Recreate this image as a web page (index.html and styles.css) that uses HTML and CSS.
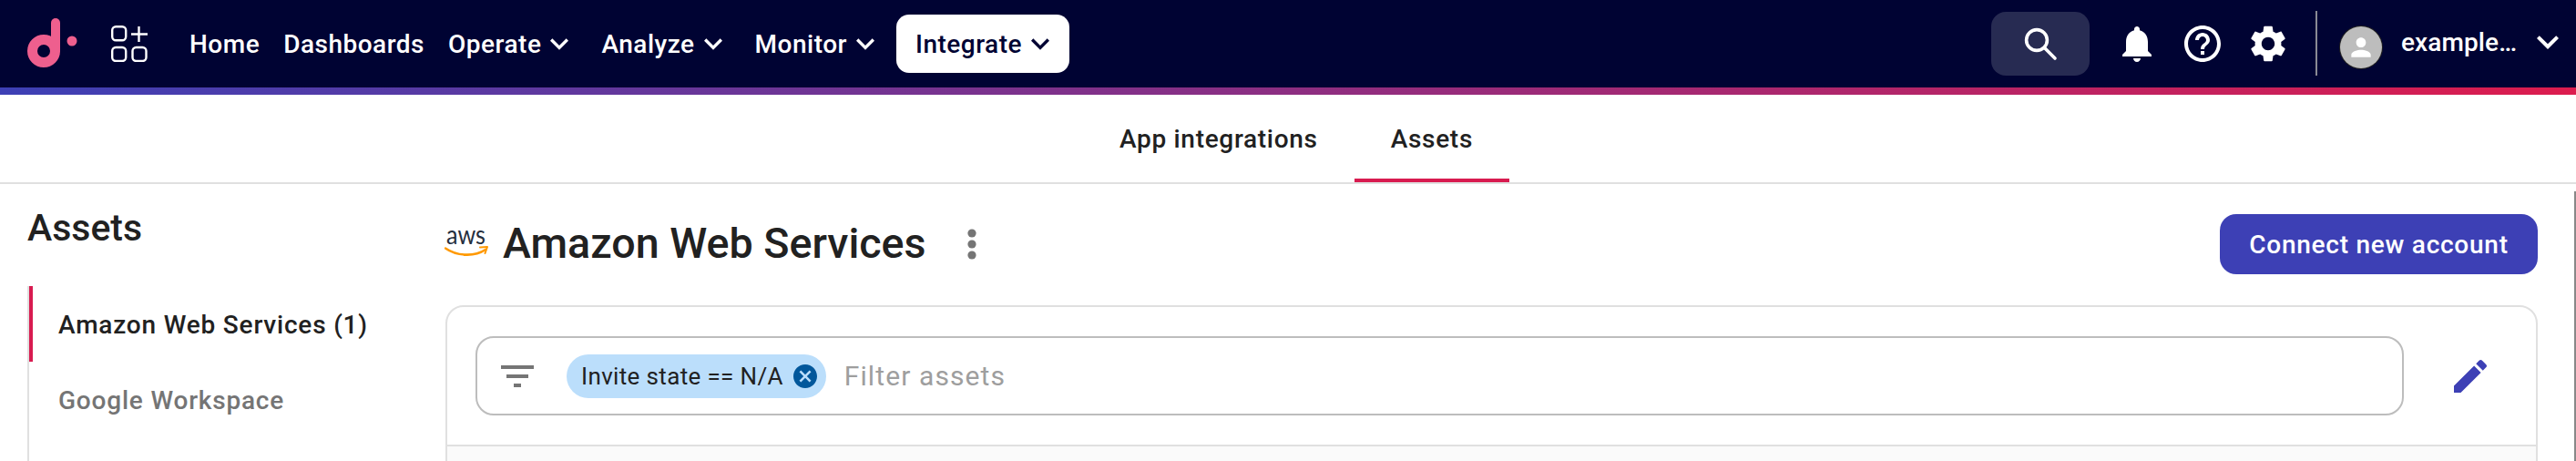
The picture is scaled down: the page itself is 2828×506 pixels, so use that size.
FILE: index.html
```html
<!DOCTYPE html>
<html lang="en">
<head>
<meta charset="utf-8">
<title>Assets</title>
<link rel="stylesheet" href="styles.css">
</head>
<body>
<header class="topbar">
  <div class="nav-left">
    <svg class="logo" width="40" height="56" viewBox="0 0 40 56"><circle cx="19" cy="36" r="12.5" fill="none" stroke="#ee5f8e" stroke-width="11"/><rect x="27" y="0" width="10" height="40" rx="5" fill="#ee5f8e"/></svg>
    <svg class="logo-dot" width="12" height="12" viewBox="0 0 12 12"><circle cx="6" cy="6" r="5.5" fill="#ee5f8e"/></svg>
    <svg class="apps" width="40" height="40" viewBox="0 0 40 40" fill="none" stroke="#fff" stroke-width="2.4"><rect x="1.2" y="1.2" width="15" height="15" rx="4"/><path d="M30.5 1v17M22 9.5h18"/><rect x="1.2" y="24" width="15" height="15" rx="4"/><rect x="23.5" y="24" width="15" height="15" rx="4"/></svg>
    <nav class="menu">
      <a class="menu-item">Home</a>
      <a class="menu-item">Dashboards</a>
      <a class="menu-item">Operate<svg class="chev" viewBox="0 0 24 24"><path d="M7.41 8.59L12 13.17l4.59-4.58L18 10l-6 6-6-6 1.41-1.41z"/></svg></a>
      <a class="menu-item">Analyze<svg class="chev" viewBox="0 0 24 24"><path d="M7.41 8.59L12 13.17l4.59-4.58L18 10l-6 6-6-6 1.41-1.41z"/></svg></a>
      <a class="menu-item">Monitor<svg class="chev" viewBox="0 0 24 24"><path d="M7.41 8.59L12 13.17l4.59-4.58L18 10l-6 6-6-6 1.41-1.41z"/></svg></a>
      <a class="menu-item menu-item-active">Integrate<svg class="chev" viewBox="0 0 24 24"><path d="M7.41 8.59L12 13.17l4.59-4.58L18 10l-6 6-6-6 1.41-1.41z"/></svg></a>
    </nav>
  </div>
  <div class="nav-right">
    <div class="search-btn"><svg width="38" height="38" viewBox="0 0 38 38" fill="none" stroke="#fff" stroke-width="3.6" stroke-linecap="round"><circle cx="15" cy="15" r="11.4"/><path d="M23.5 23.5L35 35"/></svg></div>
    <div class="icons">
      <svg class="icon" viewBox="0 0 24 24"><path d="M12 22c1.1 0 2-.9 2-2h-4c0 1.1.89 2 2 2zm6-6v-5c0-3.07-1.64-5.64-4.5-6.32V4c0-.83-.67-1.5-1.5-1.5s-1.5.67-1.5 1.5v.68C7.63 5.36 6 7.92 6 11v5l-2 2v1h16v-1l-2-2z"/></svg>
      <svg class="icon" viewBox="0 0 24 24"><path d="M11 18h2v-2h-2v2zm1-16C6.48 2 2 6.48 2 12s4.48 10 10 10 10-4.48 10-10S17.52 2 12 2zm0 18c-4.41 0-8-3.59-8-8s3.59-8 8-8 8 3.59 8 8-3.59 8-8 8zm0-14c-2.21 0-4 1.79-4 4h2c0-1.1.9-2 2-2s2 .9 2 2c0 2-3 1.75-3 5h2c0-2.25 3-2.5 3-5 0-2.21-1.79-4-4-4z"/></svg>
      <svg class="icon" viewBox="0 0 24 24"><path d="M19.14 12.94c.04-.3.06-.61.06-.94 0-.32-.02-.64-.07-.94l2.03-1.58c.18-.14.23-.41.12-.61l-1.92-3.32c-.12-.22-.37-.29-.59-.22l-2.39.96c-.5-.38-1.03-.7-1.62-.94l-.36-2.54c-.04-.24-.24-.41-.48-.41h-3.84c-.24 0-.43.17-.47.41l-.36 2.54c-.59.24-1.13.57-1.62.94l-2.39-.96c-.22-.08-.47 0-.59.22L2.74 8.87c-.12.21-.08.47.12.61l2.03 1.58c-.05.3-.09.63-.09.94s.02.64.07.94l-2.03 1.58c-.18.14-.23.41-.12.61l1.92 3.32c.12.22.37.29.59.22l2.39-.96c.5.38 1.03.7 1.62.94l.36 2.54c.05.24.24.41.48.41h3.84c.24 0 .44-.17.47-.41l.36-2.54c.59-.24 1.13-.56 1.62-.94l2.39.96c.22.08.47 0 .59-.22l1.92-3.32c.12-.22.07-.47-.12-.61l-2.01-1.58zM12 15.6c-1.98 0-3.6-1.62-3.6-3.6s1.62-3.6 3.6-3.6 3.6 1.62 3.6 3.6-1.62 3.6-3.6 3.6z"/></svg>
    </div>
    <div class="divider"></div>
    <div class="avatar"><svg width="32" height="32" viewBox="0 0 24 24" fill="#fff"><path d="M12 12c2.21 0 4-1.79 4-4s-1.79-4-4-4-4 1.79-4 4 1.79 4 4 4zm0 2c-2.67 0-8 1.34-8 4v2h16v-2c0-2.66-5.33-4-8-4z"/></svg></div>
    <span class="user-name">example…</span>
    <svg class="user-chev" viewBox="0 0 24 24"><path d="M7.41 8.59L12 13.17l4.59-4.58L18 10l-6 6-6-6 1.41-1.41z"/></svg>
  </div>
</header>
<div class="gradient"></div>
<div class="tabs">
  <a class="tab">App integrations</a>
  <a class="tab tab-active">Assets</a>
</div>
<div class="content">
  <aside class="sidebar">
    <h2 class="side-title">Assets</h2>
    <ul class="side-list">
      <li class="side-item side-item-active">Amazon Web Services (1)</li>
      <li class="side-item">Google Workspace</li>
    </ul>
  </aside>
  <main class="main">
    <div class="main-head">
      <div class="head-left">
        <svg class="aws" width="50" height="42" viewBox="0 -12 50 42"><text class="aws-text" x="2" y="15" textLength="43" lengthAdjust="spacingAndGlyphs">aws</text><path d="M1 19.5C14 28.5 33 29 45 21" fill="none" stroke="#f90" stroke-width="2.6" stroke-linecap="round"/><path d="M39 18.5l8-.5-2.5 7" fill="none" stroke="#f90" stroke-width="2" stroke-linecap="round" stroke-linejoin="round"/></svg>
        <h1 class="title">Amazon Web Services</h1>
        <svg class="kebab" width="10" height="34" viewBox="0 0 10 34" fill="#757575"><circle cx="5" cy="5" r="4.6"/><circle cx="5" cy="17" r="4.6"/><circle cx="5" cy="29" r="4.6"/></svg>
      </div>
      <button class="primary">Connect new account</button>
    </div>
    <section class="card">
      <div class="filter-row">
        <div class="filter-box">
          <svg class="filter-icon" viewBox="0 0 24 24"><path d="M10 18h4v-2h-4v2zM3 6v2h18V6H3zm3 7h12v-2H6v2z"/></svg>
          <span class="chip">Invite state == N/A<svg class="chip-x" viewBox="2 2 20 20"><path d="M12 2C6.47 2 2 6.47 2 12s4.47 10 10 10 10-4.47 10-10S17.53 2 12 2zm5 13.59L15.59 17 12 13.41 8.41 17 7 15.59 10.59 12 7 8.41 8.41 7 12 10.59 15.59 7 17 8.41 13.41 12 17 15.59z"/></svg></span>
          <span class="placeholder">Filter assets</span>
        </div>
        <svg class="edit" viewBox="0 0 24 24"><path d="M3 17.25V21h3.75L17.81 9.94l-3.75-3.75L3 17.25zM20.71 7.04c.39-.39.39-1.02 0-1.41l-2.34-2.34c-.39-.39-1.02-.39-1.41 0l-1.83 1.83 3.75 3.75 1.83-1.83z"/></svg>
      </div>
      <div class="card-body"></div>
    </section>
  </main>
</div>
<div class="scrollbar"></div>
</body>
</html>
```
FILE: styles.css
```css
* { box-sizing: border-box; }
html, body { margin: 0; height: 506px; overflow: hidden; background: #fff; }
body { font-family: Roboto, "Liberation Sans", sans-serif; color: #212121; position: relative; }

.topbar { height: 96px; background: #000333; display: flex; justify-content: space-between; align-items: center; }
.nav-left { display: flex; align-items: center; padding-left: 29px; }
.logo { margin-top: -1px; }
.logo-dot { margin: -7px 0 0 4px; }
.apps { margin-left: 37px; margin-top: -1px; }
.menu { display: flex; align-items: center; gap: 26px; margin-left: 46px; }
.menu-item { display: flex; align-items: center; color: #fff; font-size: 28px; font-weight: 500; letter-spacing: 0.5px; white-space: nowrap; }
.chev { width: 40px; height: 40px; fill: #fff; margin-left: 0; }
.menu-item-active { background: #fff; color: #000333; height: 64px; border-radius: 14px; padding: 0 12px 0 21px; margin-left: -12px; }
.menu-item-active .chev { fill: #000333; }

.nav-right { display: flex; align-items: center; padding-right: 7px; }
.search-btn { width: 108px; height: 70px; border-radius: 16px; background: #272b52; display: flex; align-items: center; justify-content: center; margin-top: -1px; }
.icons { display: flex; gap: 24px; margin-left: 28px; }
.icon { width: 48px; height: 48px; fill: #fff; }
.divider { width: 2px; height: 71px; background: #8a8a94; margin-left: 28px; margin-top: -1px; }
.avatar { width: 46px; height: 46px; border-radius: 50%; background: #bdbdbd; box-shadow: 0 0 0 1px #222; margin-left: 25px; display: flex; align-items: center; justify-content: center; margin-top: 8px; }
.user-name { width: 128px; color: #fff; font-size: 28px; font-weight: 500; margin-left: 21px; letter-spacing: 0.1px; margin-top: -4px; white-space: nowrap; }
.user-chev { width: 48px; height: 48px; fill: #fff; margin-left: 9px; margin-top: -4px; }

.gradient { height: 8px; background: linear-gradient(90deg, #3d40b5, #dc1c4e); }

.tabs { height: 98px; border-bottom: 2px solid #e0e0e0; display: flex; justify-content: center; padding-left: 18px; }
.tab { height: 96px; padding: 4px 40px 0; display: flex; align-items: center; font-size: 28px; font-weight: 500; letter-spacing: 0.7px; color: #212121; border-bottom: 4px solid transparent; }
.tab-active { border-bottom-color: #d81b50; }

.content { display: grid; grid-template-columns: 489px 2297px; }
.sidebar { padding: 26px 0 0 30px; }
.side-title { margin: 0; font-size: 41px; font-weight: 500; line-height: 44px; color: #212121; }
.side-list { list-style: none; margin: 42px 0 0; padding: 0; border-left: 2px solid #e0e0e0; height: 300px; }
.side-item { height: 83px; padding: 2px 0 0 32px; display: flex; align-items: center; font-size: 28px; font-weight: 500; letter-spacing: 0.8px; color: #757575; }
.side-item-active { color: #212121; border-left: 4px solid #d81b50; padding-left: 28px; }

.main { min-width: 0; padding-top: 33px; }
.main-head { display: flex; justify-content: space-between; align-items: center; height: 66px; }
.head-left { display: flex; align-items: center; margin-top: -3px; }
.aws { margin-left: -1px; margin-bottom: 12px; margin-top: 3px; }
.aws-text { font-family: Lato, "Open Sans", sans-serif; font-size: 28px; fill: #252f3e; }
.title { margin: 0 0 0 14px; font-size: 46.6px; font-weight: 500; line-height: 56px; color: #212121; }
.kebab { margin-left: 45px; margin-top: 3px; }
.primary { height: 66px; width: 349px; border: 0; border-radius: 18px; background: #3d40b5; color: #fff; font-family: inherit; font-size: 28px; font-weight: 500; letter-spacing: 0.75px; padding: 0; }

.card { margin-top: 34px; border: 2px solid #e0e0e0; border-radius: 20px 20px 0 0; height: 400px; }
.filter-row { display: flex; align-items: center; padding: 32px 0 32px 31px; border-bottom: 2px solid #e0e0e0; }
.filter-box { width: 2117px; height: 87px; border: 2px solid #bdbdbd; border-radius: 20px; display: flex; align-items: center; padding-left: 20px; }
.filter-icon { width: 48px; height: 48px; fill: #757575; }
.chip { display: flex; align-items: center; height: 48px; margin-left: 30px; padding: 0 10px 0 16px; background: #bbdefb; border-radius: 24px; font-size: 26px; letter-spacing: 0.35px; color: #212121; white-space: nowrap; }
.chip-x { width: 26px; height: 26px; fill: #01579b; margin-left: 11px; }
.placeholder { margin-left: 20px; font-size: 30px; letter-spacing: 1.1px; color: #9e9e9e; }
.edit { width: 48px; height: 48px; fill: #3d40b5; margin-left: 49px; }
.card-body { height: 100%; background: #fafafa; }

.scrollbar { position: absolute; right: 0; top: 210px; bottom: 0; width: 2px; background: #888; }
```
